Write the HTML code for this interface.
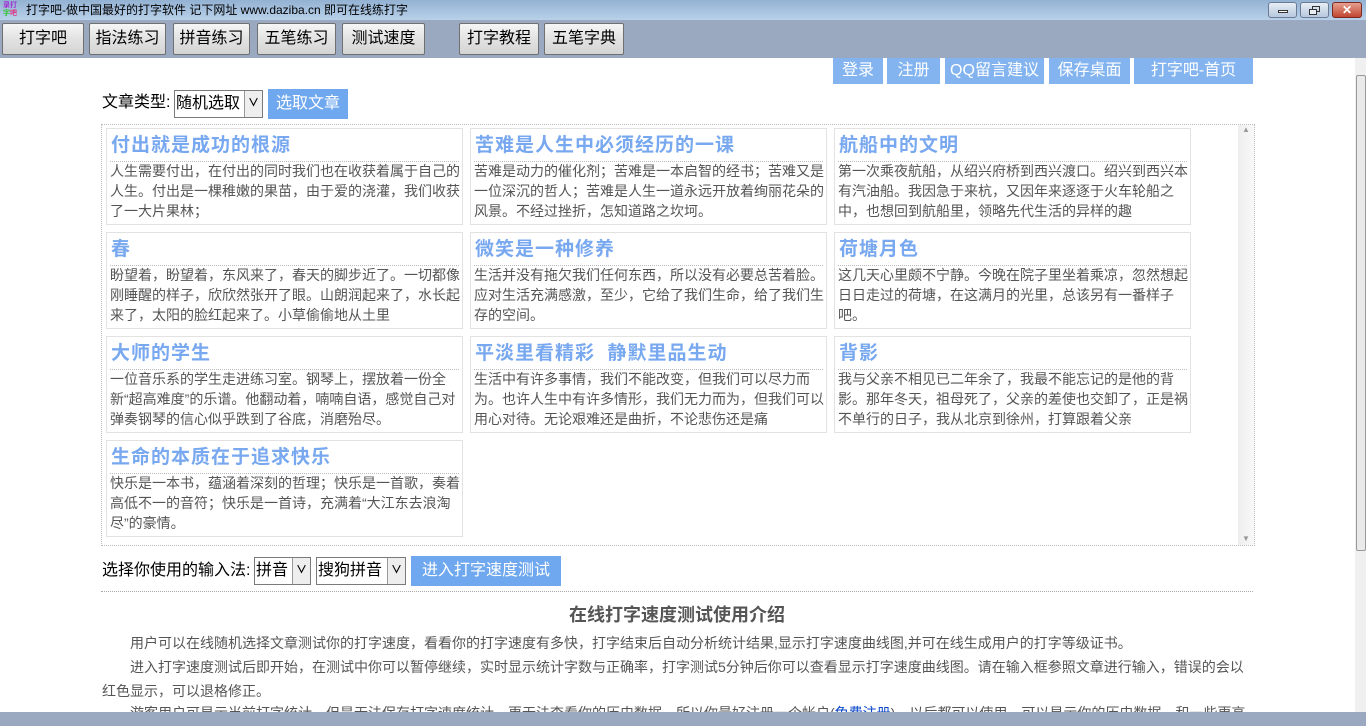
<!DOCTYPE html>
<html><head><meta charset="utf-8"><style>
*{margin:0;padding:0;box-sizing:border-box}
body{width:1366px;height:726px;overflow:hidden;position:relative;background:#fff;font-family:"Liberation Sans","Noto Sans CJK SC","WenQuanYi Zen Hei",sans-serif;color:#000}
.abs{position:absolute}
#title{left:0;top:0;width:1366px;height:20px;background:linear-gradient(#93b1d2,#b9d1ea);font-size:12px;line-height:20px}
#tool{left:0;top:20px;width:1366px;height:38px;background:#9aa9bf}
.tb{position:absolute;top:23px;height:32px;border:1px solid #707070;border-radius:2px;background:linear-gradient(#f6f6f6,#e2e2e2 50%,#d4d4d4);font-size:16px;line-height:30px;text-align:center}
.lk{position:absolute;top:58px;height:26px;background:#83b4f0;color:#fff;font-size:16px;line-height:26px;text-align:center}
.sel{position:absolute;border:1px solid #7a7a7a;background:#fff;font-size:16px;line-height:25px;padding-left:1px}
.sel i{position:absolute;right:0;top:0;width:18px;height:100%;background:#eee;border-left:1px solid #999;font-style:normal;font-size:11px;text-align:center;font-weight:bold}
.btn{position:absolute;background:#6fa8ee;color:#fff;font-size:16px;text-align:center;white-space:nowrap}
#panel{left:101px;top:124px;width:1154px;height:422px;border:1px dotted #bbb}
.card{position:absolute;width:357px;height:97px;border:1px solid #e2e2e2;padding:0 0 0 3px}
.card h3{font-size:19px;letter-spacing:1px;color:#78a8ef;font-weight:bold;height:33px;line-height:34px;padding-left:1px;border-bottom:1px dotted #bbb;white-space:nowrap;margin-right:3px}
.card p{font-size:14px;color:#555;line-height:20px;margin-top:-1px}
.intro{position:absolute;left:102px;width:1150px;font-size:14px;color:#555;line-height:24px}
</style></head><body>
<div id="title" class="abs">
 <div class="abs" style="left:3px;top:2px;width:16px;height:16px;font-size:7px;line-height:8px;font-weight:bold"><span style="color:#a030d0">录打</span><br><span style="color:#30c030">字</span><span style="color:#e03080">吧</span></div>
 <span class="abs" style="left:26px;top:0">打字吧-做中国最好的打字软件 记下网址 www.daziba.cn 即可在线练打字</span>
 <div class="abs" style="left:1268px;top:2px;width:29px;height:16px;border:1px solid #6a7c94;border-radius:3px;background:linear-gradient(#e8eef6,#b7c8de)"><div style="position:absolute;left:9px;top:7px;width:10px;height:3px;border:1px solid #333;background:#fff"></div></div>
 <div class="abs" style="left:1300px;top:2px;width:29px;height:16px;border:1px solid #6a7c94;border-radius:3px;background:linear-gradient(#e8eef6,#b7c8de)"><div style="position:absolute;left:11px;top:3px;width:8px;height:6px;border:1px solid #333"></div><div style="position:absolute;left:8px;top:6px;width:8px;height:6px;border:1px solid #333;background:#e8eef6"></div></div>
 <div class="abs" style="left:1332px;top:2px;width:30px;height:16px;border:1px solid #7a2a20;border-radius:3px;background:linear-gradient(#e8a090,#c04530);color:#fff;font-size:12px;font-weight:bold;text-align:center;line-height:14px">✕</div>
</div>
<div id="tool" class="abs"></div>
<div class="tb" style="left:2px;width:82px">打字吧</div>
<div class="tb" style="left:89px;width:77px">指法练习</div>
<div class="tb" style="left:173px;width:77px">拼音练习</div>
<div class="tb" style="left:257px;width:79px">五笔练习</div>
<div class="tb" style="left:342px;width:83px">测试速度</div>
<div class="tb" style="left:459px;width:80px">打字教程</div>
<div class="tb" style="left:544px;width:80px">五笔字典</div>

<div class="lk" style="left:833px;width:50px">登录</div>
<div class="lk" style="left:887px;width:53px">注册</div>
<div class="lk" style="left:945px;width:99px">QQ留言建议</div>
<div class="lk" style="left:1049px;width:81px">保存桌面</div>
<div class="lk" style="left:1134px;width:119px">打字吧-首页</div>

<div class="abs" style="left:1355px;top:58px;width:11px;height:654px;background:#f0f0f0"><div style="position:absolute;left:1px;top:17px;width:10px;height:476px;border:1px solid #999;border-radius:2px;background:#eaeaea"></div></div>

<div class="abs" style="left:102px;top:91px;font-size:16px;line-height:24px">文章类型:</div>
<div class="sel" style="left:174px;top:90px;width:89px;height:28px">随机选取<i>∨</i></div>
<div class="btn" style="left:268px;top:89px;width:80px;height:30px;line-height:30px">选取文章</div>

<div id="panel" class="abs">
 <div class="abs" style="left:1136px;top:0;width:16px;height:420px;background:linear-gradient(90deg,#eee,#f8f8f8);font-size:8px;color:#999;text-align:center">▲<div style="position:absolute;bottom:2px;width:16px">▼</div></div>
</div>
<div class="card" style="left:106px;top:128px"><h3>付出就是成功的根源</h3><p>人生需要付出，在付出的同时我们也在收获着属于自己的人生。付出是一棵稚嫩的果苗，由于爱的浇灌，我们收获了一大片果林；</p></div>
<div class="card" style="left:470px;top:128px"><h3>苦难是人生中必须经历的一课</h3><p>苦难是动力的催化剂；苦难是一本启智的经书；苦难又是一位深沉的哲人；苦难是人生一道永远开放着绚丽花朵的风景。不经过挫折，怎知道路之坎坷。</p></div>
<div class="card" style="left:834px;top:128px"><h3>航船中的文明</h3><p>第一次乘夜航船，从绍兴府桥到西兴渡口。绍兴到西兴本有汽油船。我因急于来杭，又因年来逐逐于火车轮船之中，也想回到航船里，领略先代生活的异样的趣</p></div>
<div class="card" style="left:106px;top:232px"><h3>春</h3><p>盼望着，盼望着，东风来了，春天的脚步近了。一切都像刚睡醒的样子，欣欣然张开了眼。山朗润起来了，水长起来了，太阳的脸红起来了。小草偷偷地从土里</p></div>
<div class="card" style="left:470px;top:232px"><h3>微笑是一种修养</h3><p>生活并没有拖欠我们任何东西，所以没有必要总苦着脸。应对生活充满感激，至少，它给了我们生命，给了我们生存的空间。</p></div>
<div class="card" style="left:834px;top:232px"><h3>荷塘月色</h3><p>这几天心里颇不宁静。今晚在院子里坐着乘凉，忽然想起日日走过的荷塘，在这满月的光里，总该另有一番样子吧。</p></div>
<div class="card" style="left:106px;top:336px"><h3>大师的学生</h3><p>一位音乐系的学生走进练习室。钢琴上，摆放着一份全新“超高难度”的乐谱。他翻动着，喃喃自语，感觉自己对弹奏钢琴的信心似乎跌到了谷底，消磨殆尽。</p></div>
<div class="card" style="left:470px;top:336px"><h3>平淡里看精彩&nbsp; 静默里品生动</h3><p>生活中有许多事情，我们不能改变，但我们可以尽力而为。也许人生中有许多情形，我们无力而为，但我们可以用心对待。无论艰难还是曲折，不论悲伤还是痛</p></div>
<div class="card" style="left:834px;top:336px"><h3>背影</h3><p>我与父亲不相见已二年余了，我最不能忘记的是他的背影。那年冬天，祖母死了，父亲的差使也交卸了，正是祸不单行的日子，我从北京到徐州，打算跟着父亲</p></div>
<div class="card" style="left:106px;top:440px"><h3>生命的本质在于追求快乐</h3><p>快乐是一本书，蕴涵着深刻的哲理；快乐是一首歌，奏着高低不一的音符；快乐是一首诗，充满着“大江东去浪淘尽”的豪情。</p></div>

<div class="abs" style="left:102px;top:559px;font-size:16px;line-height:24px">选择你使用的输入法:</div>
<div class="sel" style="left:254px;top:557px;width:57px;height:28px">拼音<i>∨</i></div>
<div class="sel" style="left:316px;top:557px;width:90px;height:28px">搜狗拼音<i>∨</i></div>
<div class="btn" style="left:411px;top:556px;width:150px;height:30px;line-height:30px">进入打字速度测试</div>
<div class="abs" style="left:101px;top:591px;width:1152px;border-top:1px dotted #aaa"></div>

<div class="abs" style="left:101px;top:603px;width:1152px;text-align:center;font-size:18px;font-weight:bold;color:#555;line-height:24px">在线打字速度测试使用介绍</div>
<div class="intro" style="top:631px;text-indent:28px">用户可以在线随机选择文章测试你的打字速度，看看你的打字速度有多快，打字结束后自动分析统计结果,显示打字速度曲线图,并可在线生成用户的打字等级证书。</div>
<div class="intro" style="top:655px;text-indent:28px">进入打字速度测试后即开始，在测试中你可以暂停继续，实时显示统计字数与正确率，打字测试5分钟后你可以查看显示打字速度曲线图。请在输入框参照文章进行输入，错误的会以红色显示，可以退格修正。</div>
<div class="intro" style="top:701px;text-indent:28px;white-space:nowrap">游客用户可显示当前打字统计，但是无法保存打字速度统计，更无法查看你的历史数据，所以你最好注册一个帐户(<span style="color:#0645c8">免费注册</span>)，以后都可以使用，可以显示你的历史数据，和一些更高</div>
<div class="abs" style="left:0;top:712px;width:1366px;height:14px;background:#9aa9bf"></div>
</body></html>
